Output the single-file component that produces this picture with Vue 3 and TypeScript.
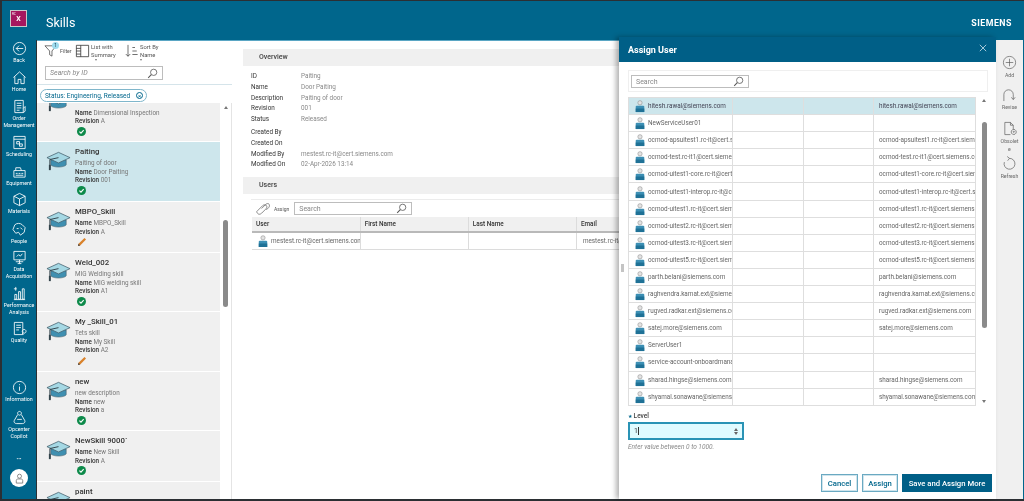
<template>
  <div class="app">
    <svg class="sprite" width="0" height="0">
      <symbol id="user" viewBox="0 0 14 17">
        <circle cx="7" cy="4" r="3" fill="#e3e3e3" stroke="#8c8c8c" stroke-width="0.8" />
        <path d="M1 17V9.500C1 8.500 2 8 3 8h8c1 0 2 .5 2 1.500V17z" fill="#3c8fb4" />
        <path d="M1 12h12v5H1z" fill="#1f7196" />
      </symbol>
      <symbol id="cap" viewBox="0 0 26 20">
        <path d="M5 9v5c2 3 14 3 16 0V9z" fill="#3f8fb0" stroke="#44606c" stroke-width="0.6" />
        <path d="M13 1 25 6.500 13 12 1 6.500z" fill="#a5d8e4" stroke="#44606c" stroke-width="0.8" />
        <path d="M13 6.500 4 8.500V18" fill="none" stroke="#33444c" stroke-width="1" />
        <rect x="3" y="14" width="2" height="5.500" fill="#33444c" />
      </symbol>
      <symbol id="glass" viewBox="0 0 14 14">
        <circle cx="8.500" cy="5.500" r="4" fill="none" stroke="#555" />
        <path d="M5.500 8.500 1.500 12.500" stroke="#555" stroke-width="1.300" />
      </symbol>
    </svg>

    <header class="topbar">
      <div class="logo"><small>RC</small><b>X</b></div>
      <h1>Skills</h1>
      <span class="brand">SIEMENS</span>
    </header>

    <div class="body">
      <nav class="rail">
        <a v-for="item in navTop" :key="item.label" class="nav-item" :style="{ height: item.h + 'px' }">
          <svg viewBox="0 0 16 16" width="15" height="15" fill="none" stroke="#fff" stroke-width="0.9">
            <path :d="item.d" />
          </svg>
          <span>{{ item.label }}</span>
        </a>
        <div class="rail-bottom">
          <a v-for="item in navBottom" :key="item.label" class="nav-item" :style="{ height: item.h + 'px' }">
            <svg viewBox="0 0 16 16" width="15" height="15" fill="none" stroke="#fff" stroke-width="0.9">
              <path :d="item.d" />
            </svg>
            <span>{{ item.label }}</span>
          </a>
          <div class="dots">•••</div>
          <div class="avatar">
            <svg viewBox="0 0 12 12" width="11" height="11" fill="none" stroke="#666" stroke-width="0.8">
              <circle cx="6" cy="3.500" r="2.200" />
              <path d="M2.500 11V8c0-1 1-1.500 2-1.500h3c1 0 2 .5 2 1.500v3z" />
            </svg>
          </div>
        </div>
      </nav>

      <aside class="list-panel">
        <div class="list-tools">
          <div class="tool filter">
            <svg viewBox="0 0 16 16" width="15" height="15" fill="none" stroke="#444" stroke-width="0.8">
              <path d="M1 3h12L8.500 8.500V14L6 12.500V8.500z" />
            </svg>
            <i class="count">1</i>
            <span>Filter</span>
          </div>
          <div class="tool layout">
            <svg viewBox="0 0 16 16" width="15" height="14" fill="none" stroke="#333" stroke-width="0.9">
              <path d="M1 1.500h14v13H1zM6 1.500v13M1 5h5M1 8h5M1 11.500h5" />
            </svg>
            <span>List with<br />Summary</span>
            <i class="more"></i>
          </div>
          <div class="tool sort">
            <svg viewBox="0 0 16 16" width="15" height="14" fill="none" stroke="#333" stroke-width="0.8">
              <path d="M4 1v13M1.500 11.500 4 14l2.500-2.500M9 4h3M9 8h5M9 12h6" />
            </svg>
            <span>Sort By<br />Name</span>
            <i class="more"></i>
          </div>
        </div>
        <div class="search list-search">
          <span>Search by ID</span>
          <svg width="11" height="11"><use href="#glass" /></svg>
        </div>
        <div class="chip-row">
          <div class="chip">
            <span>Status: Engineering, Released</span>
            <i>×</i>
          </div>
        </div>
        <div class="list-wrap">
          <div class="cards">
            <article
              v-for="skill in skills"
              :key="skill.id"
              class="card"
              :class="{ selected: skill.id === 'Paiting' }"
              :style="{ height: skill.h + 'px' }"
            >
              <svg class="cap" width="25" height="20"><use href="#cap" /></svg>
              <div class="card-text">
                <h3>{{ skill.id }}</h3>
                <p v-if="skill.desc" class="desc">{{ skill.desc }}</p>
                <p><b>Name</b> {{ skill.name }}</p>
                <p><b>Revision</b> {{ skill.rev }}</p>
                <svg v-if="skill.released" class="state" viewBox="0 0 10 10" width="9" height="9">
                  <circle cx="5" cy="5" r="5" fill="#0d8a4a" />
                  <path d="M2.700 5.200 4.400 6.900 7.400 3.500" fill="none" stroke="#fff" stroke-width="1.200" />
                </svg>
                <svg v-else class="state" viewBox="0 0 10 10" width="10" height="10">
                  <path d="M1 9 1.500 6.800 7.500 1 9 2.500 3.200 8.500z" fill="#d9822b" />
                  <path d="M1 9 1.500 6.800 3.200 8.500z" fill="#444" />
                </svg>
              </div>
            </article>
          </div>
          <div class="list-scroll">
            <i class="up"></i>
            <i class="thumb"></i>
          </div>
        </div>
      </aside>

      <main class="detail">
        <section class="band">Overview</section>
        <dl class="props">
          <template v-for="row in overview" :key="row[0]">
            <dt>{{ row[0] }}</dt>
            <dd>{{ row[1] }}</dd>
          </template>
        </dl>
        <dl class="props second">
          <template v-for="row in audit" :key="row[0]">
            <dt>{{ row[0] }}</dt>
            <dd>{{ row[1] }}</dd>
          </template>
        </dl>
        <section class="band users">Users</section>
        <div class="users-tools">
          <svg viewBox="0 0 16 16" width="15" height="15" fill="none" stroke="#666" stroke-width="0.8">
            <path d="M1.500 10.500 7 5c1.500-1.500 4-1 4.500.5S11 8 9.500 9.500L6 13c-1.500 1.500-3.500 1.500-4.500 0s-1-1.500 0-2.500z" />
            <path d="M6 8 10.500 3.500c1-1 3-1 3.500 0s.5 2.500-.5 3.500L11 9.500" />
          </svg>
          <span class="assign-label">Assign</span>
          <div class="search users-search">
            <span>Search</span>
            <svg width="11" height="11"><use href="#glass" /></svg>
          </div>
        </div>
        <table class="users-table">
          <thead>
            <tr><th>User</th><th>First Name</th><th>Last Name</th><th>Email</th></tr>
          </thead>
          <tbody>
            <tr>
              <td><svg class="person" width="10" height="12"><use href="#user" /></svg>mestest.rc-it@cert.siemens.com</td>
              <td></td>
              <td></td>
              <td>mestest.rc-it@cert.siemens.com</td>
            </tr>
          </tbody>
        </table>
      </main>

      <aside class="actions">
        <a v-for="act in actions" :key="act.label" class="action" :style="{ height: act.h + 'px' }">
          <svg viewBox="0 0 16 16" width="15" height="15" fill="none" stroke="#555" stroke-width="0.7">
            <path :d="act.d" />
          </svg>
          <span>{{ act.label }}</span>
        </a>
      </aside>

      <div class="drawer">
        <i class="grip"></i>
        <div class="drawer-head">
          <h2>Assign User</h2>
          <svg viewBox="0 0 10 10" width="8" height="8" stroke="#cfe3ec" stroke-width="1"><path d="M1 1l8 8M9 1l-8 8" /></svg>
        </div>
        <div class="drawer-body">
          <div class="drawer-search">
            <div class="search modal-search">
              <span>Search</span>
              <svg width="11" height="11"><use href="#glass" /></svg>
            </div>
          </div>
          <div class="grid-wrap">
            <table class="pick-table">
              <tbody>
                <tr v-for="(u, i) in people" :key="u[0]" :class="{ picked: i === 0 }">
                  <td><svg class="person" width="10" height="14"><use href="#user" /></svg>{{ u[0] }}</td>
                  <td></td>
                  <td></td>
                  <td>{{ u[1] }}</td>
                </tr>
              </tbody>
            </table>
            <div class="pick-scroll">
              <i class="up"></i>
              <i class="thumb"></i>
              <i class="down"></i>
            </div>
          </div>
          <label class="level-label"><em>★</em> Level</label>
          <div class="level">
            <span>1</span>
            <i class="caret"></i>
            <div class="spin"><i></i><i></i></div>
          </div>
          <p class="hint">Enter value between 0 to 1000.</p>
          <div class="buttons">
            <button type="button" class="btn cancel">Cancel</button>
            <button type="button" class="btn assign">Assign</button>
            <button type="button" class="btn primary">Save and Assign More</button>
          </div>
        </div>
      </div>
    </div>
  </div>
</template>

<script setup lang="ts">
type NavItem = { label: string; d: string; h: number };

const navTop: NavItem[] = [
  { label: "Back", h: 29, d: "M8 1.500a6.500 6.500 0 1 1-.01 13M12 8H4.500M7.500 5 4.500 8l3 3M8 14.500A6.500 6.500 0 0 1 1.500 8 6.500 6.500 0 0 1 8 1.500" },
  { label: "Home", h: 29, d: "M1.500 8 8 2l6.500 6M3 7v7.500h3.500V10h3v4.500H13V7" },
  { label: "Order Management", h: 36, d: "M3 1.500h9v13H3zM5 4.500h5M5 7h5M5 9.500h5M5 12h3M12 10l2-2v5l-2 1.500" },
  { label: "Scheduling", h: 29, d: "M2 1.500h12v13H2zM2 4.500h12M5 7h3v2.500H5zM8 9.500h3V12H8z" },
  { label: "Equipment", h: 28, d: "M2 7h12v7H2zM4 7V4h5l1 3M4 10h2M7 10h2M10 10h2M4 12h8" },
  { label: "Materials", h: 30, d: "M8 1.500 14 4.500v7L8 14.500 2 11.500v-7zM2 4.500 8 7.500l6-3M8 7.500v7" },
  { label: "People", h: 28, d: "M3 3c2-2 6-2 8 0l3 3-1 5-4 3-2-3-3 1-3-4zM5 7h2M9 6l2 2" },
  { label: "Data Acquisition", h: 36, d: "M2 1.500h12v9H2zM4 12.500h8M6 14.500h4M8 10.500v4M5 7l2-2 2 1.500L11 4" },
  { label: "Performance Analysis", h: 35, d: "M2 14.500h12M3 9h2v5H3zM7 6h2v8H7zM11 3h2v11h-2zM2 3h3M4 1v4" },
  { label: "Quality", h: 29, d: "M2.500 1.500h9v13h-9zM4.500 4.500h5M4.500 7h5M4.500 9.500h3M13 9a2 2 0 1 1-.01 0M11 13l1 1.500" },
];

const navBottom: NavItem[] = [
  { label: "Information", h: 30, d: "M8 1.500a6.500 6.500 0 1 0 .01 0M8 7v4.500M8 4.500v1" },
  { label: "Opcenter Copilot", h: 36, d: "M8 1.500a2 2 0 1 0 .01 0M6 5 2.500 11c-1 2 .5 3.500 2.500 3.500h6c2 0 3.500-1.500 2.500-3.500L10 5M5.500 10h5" },
];

const actions: NavItem[] = [
  { label: "Add", h: 32, d: "M8 1.500a6.500 6.500 0 1 0 .01 0M8 4v8M4 8h8" },
  { label: "Revise", h: 34, d: "M2 15V8a5 5 0 0 1 10 0v5M10 11l2 2.500 2-2.500" },
  { label: "Obsolete", h: 35, d: "M3 1.500h6l3 3V9M3 1.500v13h6M9 1.500v3h3M12.500 9a2.700 2.700 0 1 0 .01 0M12.500 11a.6.6 0 1 0 .01 0" },
  { label: "Refresh", h: 30, d: "M8 2.500a5.800 5.800 0 1 1-5.500 4M8 2.500l-2.500-2M8 2.500 6 5" },
];

const skills = [
  { id: "Dimensional", desc: "\u00a0", name: "Dimensional Inspection", rev: "A", released: true, h: 59 },
  { id: "Paiting", desc: "Paiting of door", name: "Door Paiting", rev: "001", released: true, h: 60 },
  { id: "MBPO_Skill", desc: "", name: "MBPO_Skill", rev: "A", released: false, h: 51 },
  { id: "Weld_002", desc: "MIG Welding skill", name: "MIG welding skill", rev: "A1", released: true, h: 59 },
  { id: "My _Skill_01", desc: "Tets skill", name: "My Skill", rev: "A2", released: false, h: 60 },
  { id: "new", desc: "new description", name: "new", rev: "a", released: true, h: 59 },
  { id: "NewSkill 9000`", desc: "", name: "New Skill", rev: "A", released: true, h: 51 },
  { id: "paint", desc: "", name: "paint", rev: "A", released: true, h: 51 },
];

const overview = [
  ["ID", "Paiting"],
  ["Name", "Door Paiting"],
  ["Description", "Paiting of door"],
  ["Revision", "001"],
  ["Status", "Released"],
];

const audit = [
  ["Created By", ""],
  ["Created On", ""],
  ["Modified By", "mestest.rc-it@cert.siemens.com"],
  ["Modified On", "02-Apr-2026 13:14"],
];

const people = [
  ["hitesh.rawal@siemens.com", "hitesh.rawal@siemens.com"],
  ["NewServiceUser01", ""],
  ["ocmod-apsuitest1.rc-it@cert.siemens.com", "ocmod-apsuitest1.rc-it@cert.siemens.com"],
  ["ocmod-test.rc-it1@cert.siemens.com", "ocmod-test.rc-it1@cert.siemens.com"],
  ["ocmod-uitest1-core.rc-it@cert.siemens.com", "ocmod-uitest1-core.rc-it@cert.siemens.com"],
  ["ocmod-uitest1-interop.rc-it@cert.siemens.com", "ocmod-uitest1-interop.rc-it@cert.siemens.com"],
  ["ocmod-uitest1.rc-it@cert.siemens.com", "ocmod-uitest1.rc-it@cert.siemens.com"],
  ["ocmod-uitest2.rc-it@cert.siemens.com", "ocmod-uitest2.rc-it@cert.siemens.com"],
  ["ocmod-uitest3.rc-it@cert.siemens.com", "ocmod-uitest3.rc-it@cert.siemens.com"],
  ["ocmod-uitest5.rc-it@cert.siemens.com", "ocmod-uitest5.rc-it@cert.siemens.com"],
  ["parth.belani@siemens.com", "parth.belani@siemens.com"],
  ["raghvendra.kamat.ext@siemens.com", "raghvendra.kamat.ext@siemens.com"],
  ["rugved.radkar.ext@siemens.com", "rugved.radkar.ext@siemens.com"],
  ["satej.more@siemens.com", "satej.more@siemens.com"],
  ["ServerUser1", ""],
  ["service-account-onboardmanager", ""],
  ["sharad.hingse@siemens.com", "sharad.hingse@siemens.com"],
  ["shyamal.sonawane@siemens.com", "shyamal.sonawane@siemens.com"],
];
</script>

<style>
html,
body {
  margin: 0;
  background: #2b2f33;
  overflow: hidden;
}
</style>

<style scoped>
.app {
  width: 1024px;
  height: 501px;
  box-sizing: border-box;
  padding: 1px 0 2px 2px;
  display: flex;
  flex-direction: column;
  overflow: hidden;
  background: #2b2f33;
  color: #333;
  font-family: Roboto, "Open Sans", sans-serif;
  font-size: 6.350px;
  filter: blur(0.4px);
}
.sprite {
  position: absolute;
}

/* top bar */
.topbar {
  height: 39px;
  flex: none;
  display: flex;
  align-items: center;
  background: #00668c;
  color: #fff;
}
.logo {
  width: 17px;
  height: 17px;
  margin-left: 8px;
  margin-bottom: 5px;
  box-sizing: border-box;
  border: 1px solid #c9c9c9;
  background: #a5175f;
  display: flex;
  flex-direction: column;
  align-items: center;
  font-size: 7px;
  line-height: 6px;
  padding-top: 1px;
}
.logo small {
  font-size: 3px;
  line-height: 4px;
  align-self: flex-start;
  margin-left: 1px;
}
.topbar h1 {
  margin: 4px 0 0 19px;
  font-size: 12.500px;
  font-weight: 400;
}
.brand {
  margin: 4px 12px 0 auto;
  font-size: 8.800px;
  font-weight: 700;
  letter-spacing: 0.5px;
}

.body {
  flex: 1;
  min-height: 0;
  display: flex;
  position: relative;
}

/* left nav */
.rail {
  width: 34px;
  flex: none;
  background: #00668c;
  color: #fff;
  display: flex;
  flex-direction: column;
  padding-top: 1px;
}
.nav-item {
  display: flex;
  flex-direction: column;
  align-items: center;
  text-align: center;
  font-size: 5.300px;
  line-height: 6.500px;
  flex: none;
}
.nav-item svg {
  margin-bottom: 1px;
  flex: none;
}
.rail-bottom {
  margin-top: auto;
  display: flex;
  flex-direction: column;
  align-items: center;
}
.rail-bottom .nav-item {
  width: 100%;
}
.dots {
  font-size: 5px;
  line-height: 6px;
  margin: 10px 0 7px;
  color: #dfeaef;
}
.avatar {
  width: 18px;
  height: 18px;
  border-radius: 50%;
  background: #fff;
  display: flex;
  align-items: center;
  justify-content: center;
  margin-bottom: 12px;
}

/* list panel */
.list-panel {
  width: 195px;
  flex: none;
  background: #fff;
  border-top: 1px solid #5aa6c4;
  display: flex;
  flex-direction: column;
  min-height: 0;
  margin-left: 1px;
}
.list-tools {
  height: 20px;
  flex: none;
  display: flex;
  align-items: flex-start;
  padding: 2px 0 0 7px;
  font-size: 5.800px;
  line-height: 8px;
  color: #555;
}
.tool {
  display: flex;
  align-items: center;
  gap: 1px;
  position: relative;
}
.filter {
  width: 31px;
  font-size: 5.200px;
}
.layout {
  width: 49px;
}
.count {
  position: absolute;
  left: 8px;
  top: -1px;
  width: 7px;
  height: 7px;
  border-radius: 50%;
  background: #9fdcee;
  color: #134;
  font-size: 4.500px;
  line-height: 7px;
  text-align: center;
  font-style: normal;
}
.more {
  position: absolute;
  left: 20px;
  top: 16px;
  width: 0;
  height: 0;
  border: 1.500px solid transparent;
  border-bottom: 0;
  border-top: 2px solid #777;
}
.sort .more {
  left: 16px;
}
.search {
  display: flex;
  align-items: center;
  justify-content: space-between;
  box-sizing: border-box;
  background: #fff;
  border: 1px solid #bdbdbd;
  padding: 0 4px;
  color: #888;
  font-style: italic;
  font-size: 7px;
}
.list-search {
  width: 118px;
  height: 14px;
  margin: 3px 0 0 8px;
  flex: none;
}
.chip-row {
  flex: none;
  margin-top: 4px;
  border-top: 1px solid #d5e4ea;
  padding: 4px 0 1px 3px;
}
.chip {
  width: 107px;
  height: 13px;
  box-sizing: border-box;
  border: 1px solid #7fb6cb;
  border-radius: 7px;
  display: flex;
  align-items: center;
  justify-content: space-between;
  padding: 0 3px 0 4px;
  font-size: 6.500px;
  color: #00668c;
  white-space: nowrap;
}
.chip i {
  width: 7px;
  height: 7px;
  border: 1px solid #00668c;
  border-radius: 50%;
  font-style: normal;
  text-align: center;
  line-height: 6px;
  font-size: 6px;
  box-sizing: border-box;
}
.list-wrap {
  flex: 1;
  min-height: 0;
  display: flex;
  overflow: hidden;
  border-right: 1px solid #e4e4e4;
}
.cards {
  width: 183px;
  flex: none;
  margin-top: -20px;
}
.card {
  box-sizing: border-box;
  background: #f0f0f0;
  border-bottom: 1px solid #fff;
  padding: 5px 0 0 9px;
  display: flex;
  gap: 4px;
  overflow: hidden;
}
.card.selected {
  background: #cde6ec;
}
.cap {
  flex: none;
  margin-top: 4px;
}
.card-text {
  min-width: 0;
  line-height: 8.500px;
  color: #777;
}
.card-text h3 {
  margin: 0 0 2px;
  font-size: 7.800px;
  line-height: 10px;
  font-weight: 500;
  color: #333;
}
.card-text p {
  margin: 0;
  white-space: nowrap;
}
.card-text b {
  color: #333;
  font-weight: 500;
}
.state {
  display: block;
  margin: 1px 0 0 2px;
}
.list-scroll {
  flex: 1;
  position: relative;
}
.up {
  display: block;
  width: 0;
  height: 0;
  border: 2px solid transparent;
  border-top: 0;
  border-bottom: 3px solid #777;
  margin: 3px auto 0;
}
.list-scroll .thumb {
  position: absolute;
  top: 117px;
  left: 3px;
  width: 5px;
  height: 87px;
  border-radius: 3px;
  background: #8a8a8a;
}

/* detail */
.detail {
  flex: 1;
  min-width: 0;
  background: #fff;
  border-top: 1px solid #5aa6c4;
  padding: 8px 0 0 11px;
  overflow: hidden;
}
.band {
  height: 17px;
  padding-left: 16px;
  background: #f0f0f0;
  font-size: 7px;
  line-height: 17px;
  font-weight: 500;
  color: #444;
}
.band.users {
  margin-top: 7px;
}
.props {
  margin: 5px 0 0 8px;
  display: grid;
  grid-template-columns: 50px 1fr;
  grid-auto-rows: 10.800px;
  line-height: 10.800px;
}
.props.second {
  margin-top: 2px;
}
.props dt {
  color: #333;
}
.props dd {
  margin: 0;
  color: #888;
}
.users-tools {
  margin: 5px 0 0 8px;
  border-top: 1px solid #ececec;
  height: 17px;
  display: flex;
  align-items: center;
  padding-left: 5px;
}
.assign-label {
  font-size: 5px;
  margin: 0 5px 0 3px;
  color: #555;
}
.users-search {
  width: 118px;
  height: 13px;
  font-style: normal;
}
.users-table {
  margin: 0 0 0 9px;
  width: 433px;
  table-layout: fixed;
  border-collapse: collapse;
}
.users-table th {
  height: 14px;
  background: #f0f0f0;
  border-right: 1px solid #dcdcdc;
  border-bottom: 2px solid #b9b9b9;
  text-align: left;
  padding: 0 4px;
  font-weight: 500;
  font-size: 6.400px;
}
.users-table td {
  height: 16px;
  padding: 0 0 0 6px;
  border-right: 1px solid #dcdcdc;
  border-bottom: 1px solid #dcdcdc;
  color: #666;
  overflow: hidden;
  white-space: nowrap;
}
.person {
  vertical-align: middle;
  margin-right: 3px;
}

/* right actions */
.actions {
  width: 28px;
  flex: none;
  background: #f0f0f0;
  border-right: 1px solid #00668c;
  padding-top: 15px;
  display: flex;
  flex-direction: column;
  align-items: center;
  box-sizing: border-box;
}
.action {
  display: flex;
  flex-direction: column;
  align-items: center;
  gap: 1px;
  flex: none;
  width: 100%;
  text-align: center;
  font-size: 5.200px;
  line-height: 8px;
  color: #666;
}
.action span {
  max-width: 18px;
  word-break: break-all;
}
.action svg {
  flex: none;
}

/* assign drawer */
.drawer {
  position: absolute;
  left: 617px;
  top: -3px;
  width: 377px;
  bottom: 0;
  background: #fff;
  box-shadow: -3px 0 5px rgba(0, 0, 0, 0.3);
  display: flex;
  flex-direction: column;
}
.grip {
  position: absolute;
  left: 2px;
  top: 227px;
  width: 3px;
  height: 8px;
  background: #c4c4c4;
}
.drawer-head {
  height: 25px;
  flex: none;
  box-sizing: border-box;
  background: #005f87;
  color: #fff;
  display: flex;
  align-items: center;
  justify-content: space-between;
  padding: 0 9px 0 9px;
}
.drawer-head h2 {
  margin: 0;
  font-size: 9px;
  font-weight: 700;
}
.drawer-head svg {
  margin-bottom: 3px;
}
.drawer-body {
  flex: 1;
  min-height: 0;
  padding: 8px 4px 7px 9px;
  display: flex;
  flex-direction: column;
}
.drawer-search {
  height: 22px;
  flex: none;
  box-sizing: border-box;
  width: 360px;
  border: 1px solid #efefef;
  padding: 4px 2px;
}
.modal-search {
  width: 118px;
  height: 13px;
  font-style: normal;
}
.grid-wrap {
  flex: none;
  height: 311px;
  margin-top: 3px;
  padding-top: 2px;
  box-sizing: border-box;
  display: flex;
  overflow: hidden;
}
.pick-table {
  width: 348px;
  height: 308px;
  table-layout: fixed;
  border-collapse: collapse;
}
.pick-table td {
  height: 17.100px;
  box-sizing: border-box;
  padding: 0;
  border: 1px solid #dedede;
  color: #666;
  overflow: hidden;
  white-space: nowrap;
}
.pick-table td:nth-child(1) {
  width: 104px;
  padding-left: 6px;
}
.pick-table td:nth-child(2) {
  width: 71px;
}
.pick-table td:nth-child(3) {
  width: 70px;
}
.pick-table td:nth-child(4) {
  padding-left: 5px;
}
.pick-table .picked td {
  background: #cde6ec;
  color: #445;
}
.pick-table .person {
  vertical-align: -1px;
  margin: -4px 3px -4px 0;
}
.pick-scroll {
  width: 12px;
  margin-left: 2px;
  position: relative;
}
.pick-scroll .up {
  margin-top: 2px;
}
.pick-scroll .thumb {
  position: absolute;
  left: 3.500px;
  top: 25px;
  width: 5px;
  height: 206px;
  border-radius: 3px;
  background: #8a8a8a;
}
.pick-scroll .down {
  position: absolute;
  bottom: 3px;
  left: 4px;
  width: 0;
  height: 0;
  border: 2px solid transparent;
  border-bottom: 0;
  border-top: 3px solid #777;
}
.level-label {
  margin-top: 6px;
  font-size: 6.500px;
  line-height: 8px;
  font-weight: 500;
  color: #444;
}
.level-label em {
  font-style: normal;
  color: #00668c;
  font-size: 5px;
}
.level {
  margin-top: 2px;
  width: 116px;
  height: 18px;
  box-sizing: border-box;
  border: 1px solid #2a93b5;
  box-shadow: inset 0 0 0 1px #2a93b5;
  background: #e0fbff;
  display: flex;
  align-items: center;
  padding: 0 5px;
  font-size: 7px;
}
.caret {
  width: 1px;
  height: 8px;
  background: #333;
}
.spin {
  margin-left: auto;
  display: flex;
  flex-direction: column;
  gap: 1px;
}
.spin i {
  width: 0;
  height: 0;
  border: 2px solid transparent;
  border-top: 0;
  border-bottom: 3px solid #666;
}
.spin i + i {
  border-bottom: 0;
  border-top: 3px solid #666;
}
.hint {
  margin: 3px 0 0;
  font-size: 6.500px;
  font-style: italic;
  color: #888;
}
.buttons {
  margin-top: auto;
  display: flex;
  justify-content: flex-end;
  gap: 4px;
}
.btn {
  height: 18px;
  box-sizing: border-box;
  padding: 0;
  background: #fff;
  border: 1px solid #6aa9c2;
  box-shadow: inset 0 0 0 1px #cfe4ec;
  color: #00668c;
  font-family: inherit;
  font-size: 7.700px;
  font-weight: 500;
}
.cancel {
  width: 37px;
}
.assign {
  width: 36px;
}
.btn.primary {
  width: 90px;
  background: #005f87;
  border-color: #005f87;
  box-shadow: none;
  color: #fff;
}
</style>
